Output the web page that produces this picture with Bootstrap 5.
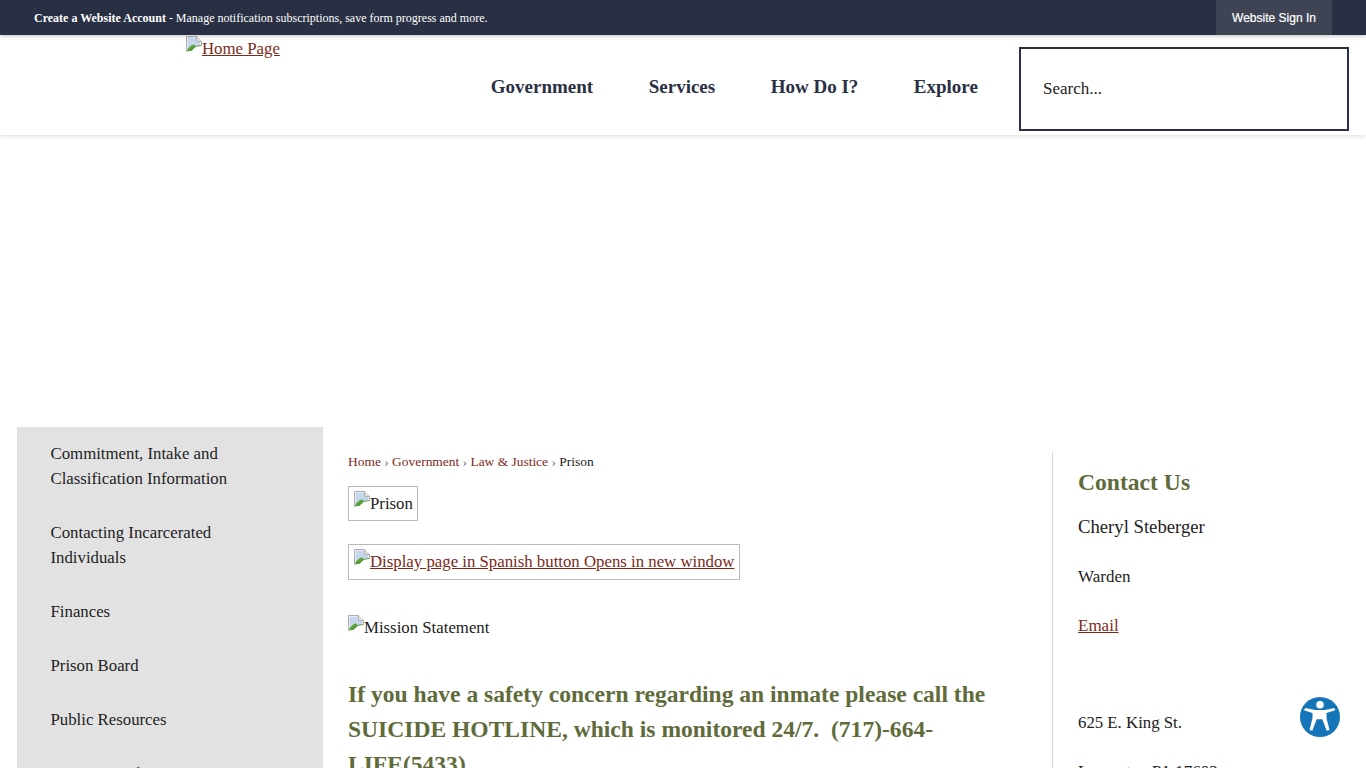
<!DOCTYPE html>
<html lang="en">
<head>
    <meta charset="UTF-8">
    <meta name="viewport" content="width=device-width, initial-scale=1.0">
    <title>Prison | Home Page</title>
    <link href="https://cdn.jsdelivr.net/npm/bootstrap@5.3.3/dist/css/bootstrap.min.css" rel="stylesheet">
    <script src="https://cdn.jsdelivr.net/npm/bootstrap@5.3.3/dist/js/bootstrap.bundle.min.js"></script>
    <style>
        html, body { height: 100%; overflow: hidden; }
        body { font-family: "Liberation Serif", serif; font-size: 17px; color: #222; background: #fff; }
        a { color: #7d2a1a; }

        .account-bar { height: 35px; background: #2a3044; color: #fff; position: relative; z-index: 2; box-shadow: 0 1px 4px rgba(0,0,0,.25); }
        .account-text { margin-left: 34px; font-size: 12px; }
        .signin-link { width: 116px; margin-right: 34px; background: #3f4454; color: #fff; font-family: "Liberation Sans", sans-serif; font-size: 12px; text-decoration: none; -webkit-text-stroke: .2px #fff; }

        .site-header { height: 100px; background: #fff; box-shadow: 0 1px 5px rgba(0,0,0,.15); position: relative; z-index: 1; }
        .logo-link { margin-left: 186px; line-height: 24px; padding-top: 1px; white-space: nowrap; font-size: 16.8px; }
        .main-nav { margin-left: 211px; gap: 55.5px; padding-top: 39px; }
        .main-nav a { color: #2a3044; font-size: 19px; font-weight: 700; line-height: 26px; text-decoration: none; }
        .search-box { width: 330px; height: 84px; margin: 12px 17px 0 auto; border: 2px solid #2a3044; padding-left: 22px; font-size: 17px; color: #222; }

        .hero-gap { height: 292px; }

        .side-menu { width: 306px; margin-left: 17px; background: #e2e2e2; padding-top: 14px; flex: none; }
        .side-menu a { display: block; padding: 0 60px 29px 33.5px; font-size: 16.8px; line-height: 25px; color: #222; text-decoration: none; }

        .main-col { width: 704px; margin-left: 25px; padding-top: 25px; flex: none; }
        .crumbs { font-size: 13.45px; line-height: 20px; margin-bottom: 14px; }
        .crumbs a { text-decoration: none; }
        .crumbs span { color: #666; }
        .alt-box { border: 1px solid #bbb; padding: 4px 4px 4px 5px; font-size: 16.8px; line-height: 25px; display: inline-block; }
        .alt-tall { padding-bottom: 5px; }
        .broken-icon { width: 16px; height: 16px; vertical-align: -1px; margin-bottom: 3px; }
        .alt-line { font-size: 16.8px; line-height: 25px; margin-bottom: 37px; }
        .safety-text { color: #5f6b3a; font-size: 23.55px; font-weight: 700; line-height: 35px; margin: 0; width: 650px; }

        .contact-col { margin-top: 25px; padding: 14px 0 0 25px; border-left: 1px solid #d8d8d8; flex: 1; }
        .contact-col h2 { color: #5f6b3a; font-size: 23.6px; font-weight: 700; line-height: 32px; margin: 0 0 16px; font-family: inherit; }
        .contact-col p { line-height: 25px; margin: 0 0 24px; }
        .contact-col .contact-name { font-size: 18.7px; margin-bottom: 25px; }
        .contact-col .contact-addr { margin-top: 72px; font-size: 16.8px; }

        .access-btn { position: fixed; left: 1300px; top: 697px; width: 40px; height: 40px; }
    </style>
</head>
<body>
    <svg width="0" height="0" class="position-absolute">
        <symbol id="broken" viewBox="0 0 16 16">
            <path d="M.5 15.500V.5h10l5 5v4.500" fill="#fff" stroke="#b0b0b0"/>
            <path d="M1.500 1.500h8.500v4.500h4.500v3.500L9 11l-5 4H1.500z" fill="#c6d6ee"/>
            <path d="M1.500 15V13C4 10.500 6 8.500 8 8.500c1 0 1.500 1.500 1.500 2.500L5.500 15z" fill="#5da53c"/>
            <path d="M1 15.500L9.500 10.500l5.500-1" fill="none" stroke="#4c8a35" stroke-width=".8"/>
            <path d="M10.500.5v5h5" fill="#e6e6e6" stroke="#b0b0b0"/>
        </symbol>
    </svg>

    <div class="account-bar d-flex align-items-stretch justify-content-between">
        <div class="account-text d-flex align-items-center"><span><b>Create a Website Account</b> - Manage notification subscriptions, save form progress and more.</span></div>
        <a class="signin-link d-flex align-items-center justify-content-center" href="#">Website Sign In</a>
    </div>

    <header class="site-header d-flex">
        <div class="logo-link"><a href="#"><svg class="broken-icon"><use href="#broken"/></svg>Home Page</a></div>
        <nav class="main-nav d-flex">
            <a href="#">Government</a>
            <a href="#">Services</a>
            <a href="#">How Do I?</a>
            <a href="#">Explore</a>
        </nav>
        <div class="search-box d-flex align-items-center">Search...</div>
    </header>

    <div class="hero-gap"></div>

    <div class="d-flex">
        <aside class="side-menu">
            <a href="#">Commitment, Intake and Classification Information</a>
            <a href="#">Contacting Incarcerated Individuals</a>
            <a href="#">Finances</a>
            <a href="#">Prison Board</a>
            <a href="#">Public Resources</a>
            <a href="#">Visitation Information</a>
        </aside>

        <main class="main-col">
            <div class="crumbs"><a href="#">Home</a> <span>›</span> <a href="#">Government</a> <span>›</span> <a href="#">Law &amp; Justice</a> <span>›</span> Prison</div>
            <div style="margin-bottom:23px"><span class="alt-box"><svg class="broken-icon"><use href="#broken"/></svg>Prison</span></div>
            <div style="margin-bottom:35px"><span class="alt-box alt-tall"><a href="#"><svg class="broken-icon"><use href="#broken"/></svg>Display page in Spanish button Opens in new window</a></span></div>
            <div class="alt-line"><svg class="broken-icon"><use href="#broken"/></svg>Mission Statement</div>
            <p class="safety-text">If you have a safety concern regarding an inmate please call the SUICIDE HOTLINE, which is monitored 24/7.&nbsp; (717)-664-LIFE(5433)</p>
        </main>

        <aside class="contact-col">
            <h2>Contact Us</h2>
            <p class="contact-name">Cheryl Steberger</p>
            <p>Warden</p>
            <p><a href="#">Email</a></p>
            <p class="contact-addr">625 E. King St.</p>
            <p>Lancaster, PA 17602</p>
        </aside>
    </div>

    <a class="access-btn" href="#" aria-label="Accessibility">
        <svg viewBox="0 0 40 40" width="40" height="40">
            <circle cx="20" cy="20" r="20" fill="#1476b8"/>
            <circle cx="20" cy="7.800" r="3.800" fill="#fff"/>
            <path d="M5.500 11L15 13h10l9.500-2 .7 2.300-8.700 2.700v5l3 12-2.800.8-4.400-11.500h-5.600l-4.400 11.500-2.800-.8 3-12v-5l-8.700-2.700z" fill="#fff"/>
        </svg>
    </a>
</body>
</html>
